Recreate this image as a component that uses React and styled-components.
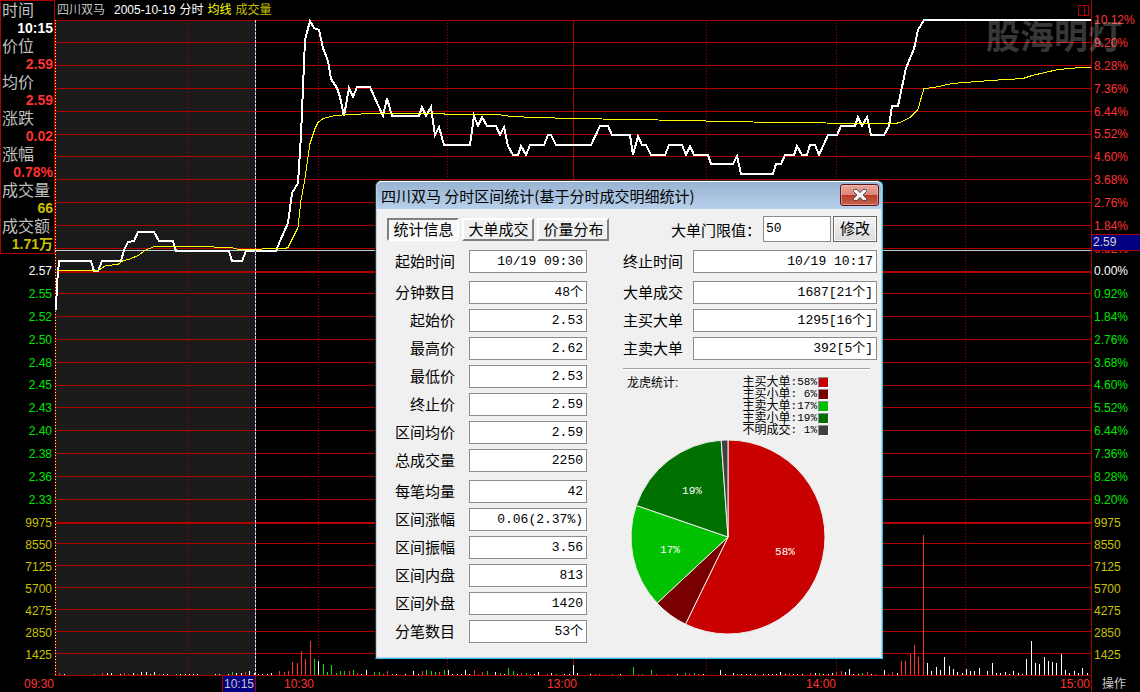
import React, { useState } from "react";
import styled, { createGlobalStyle } from "styled-components";

const RED = "#b00000";
const colors = { r: "#ff3232", g: "#00e600", w: "#ffffff", y: "#c8c000", s: "#c0c0c0" };

const rises = ["10.12%", "9.20%", "8.28%", "7.36%", "6.44%", "5.52%", "4.60%", "3.68%", "2.76%", "1.84%", "0.92%"];
const falls = ["0.92%", "1.84%", "2.76%", "3.68%", "4.60%", "5.52%", "6.44%", "7.36%", "8.28%", "9.20%"];
const prices = ["2.55", "2.52", "2.50", "2.48", "2.45", "2.43", "2.40", "2.38", "2.36", "2.33"];
const volumes = ["9975", "8550", "7125", "5700", "4275", "2850", "1425"];

const summary = [
  ["时间", "10:15", "w"],
  ["价位", "2.59", "r"],
  ["均价", "2.59", "r"],
  ["涨跌", "0.02", "r"],
  ["涨幅", "0.78%", "r"],
  ["成交量", "66", "y"],
  ["成交额", "1.71万", "y"],
];

const gridRows = [
  20, 42, 65, 88, 111, 134, 156, 179, 202, 225, 248, 293, 316, 339, 362, 385,
  407, 430, 453, 476, 499, 543, 565, 587, 609, 631, 653,
];
const dottedColumns = [188, 318, 447, 706, 836, 965];

const pricePoints =
  "55,309 56,309 57,284 59,261 91,261 94,271 98,271 102,261 121,261 124,250 128,242 134,241 138,232 154,232 159,241 173,241 176,251 229,251 232,261 242,261 246,251 276,251 280,241 288,223 292,193 298,183 301,135 305,40 310,21 314,28 319,30 323,48 328,61 331,79 337,88 340,97 344,116 349,88 353,97 357,87 370,87 383,116 387,98 392,116 419,116 422,107 426,116 431,107 435,135 439,127 444,145 470,145 474,116 478,126 482,117 487,126 496,126 500,135 504,127 508,146 513,155 518,155 521,146 526,155 530,145 544,145 548,135 551,135 556,145 591,145 600,126 608,126 612,135 630,135 633,155 638,136 642,145 646,145 651,155 665,155 669,145 682,145 686,155 690,146 694,155 708,155 711,164 733,164 737,156 741,174 773,174 776,164 781,164 785,155 794,155 797,146 802,155 807,155 810,145 815,145 819,155 828,135 837,135 841,126 855,126 858,117 862,126 867,117 871,135 884,135 889,126 892,106 898,106 906,68 914,49 918,30 924,20 1091,20";

const averagePoints =
  "57,270 98,270 106,265 118,264 123,260 129,259 138,255 145,250 154,246 196,246 231,247 239,249 285,248 288,247 298,227 301,200 305,178 310,143 315,128 318,122 323,118 335,115 350,114 372,113 442,113 447,114 498,114 511,116 537,117 572,118 632,119 684,120 727,121 779,122 873,123 895,123 900,122 910,117 918,109 921,98 924,88 934,87 952,83 990,80 1023,78 1032,75 1058,69 1081,67 1091,67";

// x, height, colour
const bars =
  "59,2,r 64,1,w 94,1,g 102,2,r 107,2,w 111,2,w 120,1,w 124,2,r 128,1,r 133,2,w 137,1,r 141,3,w 146,3,w 150,1,w 154,3,w 159,1,g 163,1,w 167,1,w 176,1,g 180,1,w 185,1,w 189,1,w 193,1,w 197,1,w 215,1,w 219,1,w 228,1,w 232,3,g 236,2,w 241,2,w 245,3,r 249,4,w 254,2,w 258,1,w 262,1,w 267,1,w 271,2,w 279,4,r 284,3,r 288,4,r 292,13,r 297,12,r 301,24,r 305,16,r 310,34,r 314,16,g 318,14,w 323,11,g 327,3,g 331,10,g 336,2,g 340,4,g 344,4,g 349,4,r 353,5,g 357,2,r 361,1,w 366,5,w 374,3,g 379,3,g 383,1,g 387,4,r 392,1,g 396,1,w 405,1,w 413,4,w 418,1,w 422,4,r 426,5,g 431,4,g 435,3,g 439,3,r 444,5,g 448,5,w 452,1,w 457,1,w 461,1,w 465,5,w 469,1,w 474,5,r 478,1,r 482,3,r 487,4,g 495,3,w 500,2,g 504,1,w 508,7,g 513,4,g 517,1,w 521,2,r 526,2,g 530,1,r 534,1,w 538,3,w 547,1,r 551,2,w 556,1,g 564,1,w 569,1,w 573,10,w 577,2,w 590,1,w 595,1,r 599,1,r 612,1,g 620,1,w 633,8,g 638,1,r 642,1,g 651,5,g 656,1,r 668,1,r 677,1,w 685,2,g 689,1,r 694,2,g 698,1,r 703,1,w 720,5,w 725,1,w 733,2,w 737,1,g 741,1,w 746,1,w 750,1,w 755,1,w 763,1,w 768,1,w 772,1,w 776,1,w 780,3,w 785,1,w 789,2,r 793,1,w 797,1,w 802,1,w 810,2,r 815,2,w 819,2,g 823,1,w 828,1,w 832,2,w 836,3,r 841,4,r 845,3,w 849,6,w 853,1,w 858,1,w 862,2,g 867,3,r 871,1,w 875,1,r 884,5,w 888,1,r 892,3,r 897,2,w 901,14,r 905,14,r 910,21,r 914,30,r 918,18,r 923,140,r 927,12,w 931,4,w 936,8,w 940,5,w 944,18,w 949,9,w 953,6,w 957,3,w 962,2,w 966,6,w 970,4,w 974,4,w 979,7,w 987,4,w 992,12,w 996,2,w 1000,2,w 1005,3,w 1009,1,w 1013,4,w 1018,2,w 1022,1,w 1026,16,w 1031,34,w 1035,12,w 1039,11,w 1044,18,w 1048,14,w 1052,13,w 1056,12,w 1061,21,w 1065,5,w 1069,2,w 1074,4,w 1078,2,w 1082,7,w 1087,2,w"
    .split(" ")
    .map(bar => bar.split(","));

const leftFields = [
  [["起始时间", "10/19 09:30"]],
  [
    ["分钟数目", "48个"],
    ["起始价", "2.53"],
    ["最高价", "2.62"],
    ["最低价", "2.53"],
    ["终止价", "2.59"],
    ["区间均价", "2.59"],
    ["总成交量", "2250"],
  ],
  [
    ["每笔均量", "42"],
    ["区间涨幅", "0.06(2.37%)"],
    ["区间振幅", "3.56"],
    ["区间内盘", "813"],
    ["区间外盘", "1420"],
    ["分笔数目", "53个"],
  ],
];

const rightFields = [
  [["终止时间", "10/19 10:17"]],
  [
    ["大单成交", "1687[21个]"],
    ["主买大单", "1295[16个]"],
    ["主卖大单", "392[5个]"],
  ],
];

const slices = [
  { name: "主买大单", percent: "58%", color: "#c80000", from: 0, to: 206, label: [155, 116] },
  { name: "主买小单", percent: " 6%", color: "#780000", from: 206, to: 227 },
  { name: "主卖大单", percent: "17%", color: "#00c000", from: 227, to: 289, label: [40, 114] },
  { name: "主卖小单", percent: "19%", color: "#007000", from: 289, to: 356, label: [62, 55] },
  { name: "不明成交", percent: " 1%", color: "#404040", from: 356, to: 360 },
];

const slicePath = ({ from, to }) => {
  const at = deg => {
    const a = (deg * Math.PI) / 180;
    return `${98 + 97 * Math.sin(a)} ${98 - 97 * Math.cos(a)}`;
  };
  return `M98 98L${at(from)}A97 97 0 ${to - from > 180 ? 1 : 0} 1 ${at(to)}Z`;
};

const Chart = () => (
  <Plot viewBox="55 20 1036 656" preserveAspectRatio="none">
    <rect x="56" y="20" width="199" height="655" fill="#1a1a1a" />
    <g stroke={RED} shapeRendering="crispEdges">
      {gridRows.map(y => (
        <line key={y} x1="55" x2="1091" y1={y + 0.5} y2={y + 0.5} />
      ))}
      <line x1="55" x2="1091" y1="272" y2="272" strokeWidth="2" />
      <line x1="55" x2="1091" y1="523" y2="523" strokeWidth="2" />
      <line x1="573.5" x2="573.5" y1="20" y2="675" />
      <line x1="55" x2="1091" y1="675.5" y2="675.5" />
      {dottedColumns.map(x => (
        <line key={x} x1={x + 0.5} x2={x + 0.5} y1="23" y2="675" strokeDasharray="1 2" />
      ))}
      <line x1="55.5" x2="55.5" y1="20" y2="675" />
    </g>
    <g shapeRendering="crispEdges">
      <line x1="55.5" x2="55.5" y1="20" y2="675" stroke="#ffff40" strokeDasharray="1 2" />
      {bars.map(([x, height, color]) => (
        <rect key={x} x={x} y={675 - height} width="1" height={height} fill={colors[color]} />
      ))}
      <line x1="55" x2="1091" y1="250.5" y2="250.5" stroke="#c8c8c8" />
    </g>
    <g fill="none" shapeRendering="crispEdges">
      <polyline points={pricePoints} stroke="#fff" strokeWidth="2" />
      <polyline points={averagePoints} stroke="#ffff00" transform="translate(0 0.5)" />
      <line x1="255.5" x2="255.5" y1="20" y2="675" stroke="#3030a0" />
      <line x1="255.5" x2="255.5" y1="20" y2="675" stroke="#d8d8d8" strokeDasharray="3 1" />
    </g>
  </Plot>
);

const Pie = () => (
  <PieChart viewBox="0 0 196 196" role="img">
    <g stroke="#f0f0f0">
      {slices.map(slice => (
        <path key={slice.name} d={slicePath(slice)} fill={slice.color} />
      ))}
    </g>
    {slices
      .filter(slice => slice.label)
      .map(({ name, percent, label }) => (
        <text key={name} x={label[0]} y={label[1]}>
          {percent}
        </text>
      ))}
  </PieChart>
);

const Fields = ({ groups, $wide }) => (
  <FieldGroups>
    {groups.map(rows => (
      <FieldGroup key={rows[0][0]}>
        {rows.map(([label, value]) => (
          <Field key={label} $wide={$wide}>
            <span>{label}</span>
            <ValueInput readOnly value={value} />
          </Field>
        ))}
      </FieldGroup>
    ))}
  </FieldGroups>
);

const StatsDialog = () => {
  const [tab, setTab] = useState("统计信息");
  const [limit, setLimit] = useState("50");

  return (
    <Dialog role="dialog" aria-labelledby="stats-title">
      <TitleBar>
        <Title id="stats-title">四川双马 分时区间统计(基于分时成交明细统计)</Title>
        <CloseButton type="button" aria-label="关闭">
          <svg width="14" height="12" viewBox="0 0 14 12">
            <path
              d="M.5 1.500Q.5.5 1.500.5H4L7 3.600 10 .5h2.500q1 0 1 1v1L10 6l3.500 3.500v1q0 1-1 1H10L7 8.400 4 11.500H1.500q-1 0-1-1v-1L4 6 .5 2.500z"
              fill="#f4f4f4"
              stroke="#4c4a55"
            />
          </svg>
        </CloseButton>
      </TitleBar>
      <DialogBody>
        <TopRow>
          <Tabs>
            {["统计信息", "大单成交", "价量分布"].map(name => (
              <Tab key={name} type="button" $active={tab === name} onClick={() => setTab(name)}>
                {name}
              </Tab>
            ))}
          </Tabs>
          <LimitForm onSubmit={e => e.preventDefault()}>
            <label htmlFor="limit">大单门限值：</label>
            <LimitInput id="limit" value={limit} onChange={e => setLimit(e.target.value)} />
            <ModifyButton>修改</ModifyButton>
          </LimitForm>
        </TopRow>
        <Columns>
          <Fields groups={leftFields} />
          <div>
            <Fields groups={rightFields} $wide />
            <Separator />
            <LegendRow>
              <span>龙虎统计:</span>
              <Legend>
                {slices.map(({ name, percent, color }) => (
                  <LegendItem key={name}>
                    {name}
                    <Percent>:{percent}</Percent>
                    <Swatch $color={color} />
                  </LegendItem>
                ))}
              </Legend>
            </LegendRow>
            <Pie />
          </div>
        </Columns>
      </DialogBody>
    </Dialog>
  );
};

const App = () => (
  <>
    <GlobalStyle />
    <Screen>
      <Main>
        <LeftColumn>
          <Summary>
            {summary.map(([label, value, color]) => (
              <React.Fragment key={label}>
                <dt>{label}</dt>
                <SummaryValue $color={color}>{value}</SummaryValue>
              </React.Fragment>
            ))}
          </Summary>
          <PriceScale>
            <ScaleLabel $color="w">2.57</ScaleLabel>
            {prices.map(p => (
              <ScaleLabel key={p} $color="g">{p}</ScaleLabel>
            ))}
          </PriceScale>
          <VolumeScale>
            {volumes.map(v => (
              <ScaleLabel key={v} $color="y">{v}</ScaleLabel>
            ))}
          </VolumeScale>
        </LeftColumn>
        <ChartColumn>
          <Header>
            <Stock>四川双马</Stock>
            <span>2005-10-19</span>
            <span>分时</span>
            <Tint $color="#ffff00">均线</Tint>
            <Tint $color="#c8c000">成交量</Tint>
            <PanelButton type="button" aria-label="面板">
              <svg width="11" height="11" viewBox="0 0 11 11" fill="none" stroke={RED}>
                <path d="M.5.5h10v10H.5zM6.500.5v10" />
              </svg>
            </PanelButton>
          </Header>
          <Chart />
        </ChartColumn>
        <RightColumn>
          <PercentScale>
            {rises.map(p => (
              <ScaleLabel key={p} $color="r">{p}</ScaleLabel>
            ))}
            <ScaleLabel $color="w">0.00%</ScaleLabel>
            {falls.map(p => (
              <ScaleLabel key={p} $color="g">{p}</ScaleLabel>
            ))}
          </PercentScale>
          <VolumeScale>
            {volumes.map(v => (
              <ScaleLabel key={v} $color="y">{v}</ScaleLabel>
            ))}
          </VolumeScale>
          <PriceTag>2.59</PriceTag>
        </RightColumn>
      </Main>
      <TimeBar>
        <Time>09:30</Time>
        <TimeTag>10:15</TimeTag>
        <Time>10:30</Time>
        <Time>13:00</Time>
        <Time>14:00</Time>
        <Time>15:00</Time>
        <ActionButton type="button">操作</ActionButton>
      </TimeBar>
      <Watermark>股海明灯</Watermark>
      <StatsDialog />
    </Screen>
  </>
);

const GlobalStyle = createGlobalStyle`
  * {
    box-sizing: border-box;
  }

  body {
    margin: 0;
    background: #000;
    font-family: "Liberation Sans", "Noto Sans CJK SC", sans-serif;
    font-size: 12px;
  }

  button, input {
    font: inherit;
    color: inherit;
    margin: 0;
    padding: 0;
  }
`;

const Screen = styled.div`
  position: relative;
  min-width: 900px;
  overflow: hidden;
  background: #000;
`;

const Main = styled.main`
  display: grid;
  grid-template-columns: 55px 1fr 49px;
`;

const LeftColumn = styled.div`
  display: flex;
  flex-direction: column;
  text-align: right;
`;

const Summary = styled.dl`
  margin: 0 0 6px;
  padding: 0 1px;
  border: 1px solid ${RED};
  font-size: 16px;
  line-height: 19px;
  color: #c0c0c0;
  text-align: left;
`;

const SummaryValue = styled.dd`
  margin: 0;
  font-size: 14px;
  font-weight: bold;
  line-height: 17px;
  text-align: right;
  color: ${p => colors[p.$color]};
`;

const PriceScale = styled.div`
  display: grid;
  grid-auto-rows: 1fr;
  height: 251px;
  margin-bottom: 1px;
  padding-right: 3px;
`;

const PercentScale = styled(PriceScale)`
  height: 502px;
  margin-top: 9px;
  padding: 0 0 0 2px;
`;

const VolumeScale = styled.div`
  display: grid;
  grid-auto-rows: 22px;
  padding: 0 3px 0 2px;
`;

const ScaleLabel = styled.span`
  align-self: center;
  line-height: 14px;
  color: ${p => colors[p.$color]};
`;

const ChartColumn = styled.div`
  min-width: 0;
`;

const Header = styled.header`
  display: flex;
  align-items: center;
  gap: 4px;
  height: 20px;
  padding-left: 2px;
  color: #fff;
  line-height: 18px;
`;

const Stock = styled.span`
  margin-right: 5px;
  color: #c0c0c0;
`;

const Tint = styled.span`
  color: ${p => p.$color};
`;

const PanelButton = styled.button`
  display: flex;
  margin: 0 2px 0 auto;
  border: 0;
  background: none;
`;

const Plot = styled.svg`
  display: block;
  width: 100%;
  height: 656px;
  overflow: visible;
`;

const RightColumn = styled.div`
  position: relative;
  border-left: 1px solid ${RED};
`;

const PriceTag = styled.div`
  position: absolute;
  top: 234px;
  left: 0;
  right: 0;
  height: 17px;
  padding-left: 1px;
  border: solid ${RED};
  border-width: 1px 0;
  background: #000080;
  color: #d8d8d8;
  line-height: 14px;
`;

const TimeBar = styled.footer`
  display: grid;
  grid-template-columns: 55px 201fr 59fr 263fr 259fr 254fr 49px;
  height: 16px;
  line-height: 16px;
  text-align: right;
  color: ${colors.r};
`;

const Time = styled.span`
  padding-right: 1px;
`;

const TimeTag = styled.span`
  justify-self: end;
  padding: 0 1px;
  border: solid ${RED};
  border-width: 0 1px;
  background: #000080;
  color: #c8c8c8;
`;

const ActionButton = styled.button`
  padding-right: 4px;
  border: 0;
  border-left: 1px solid ${RED};
  background: none;
  color: #c8c8c8;
  line-height: 16px;
`;

const Watermark = styled.div`
  position: absolute;
  top: 15px;
  right: 18px;
  font-family: "Noto Sans CJK SC", sans-serif;
  font-size: 34px;
  font-weight: bold;
  line-height: 40px;
  color: rgba(255, 255, 255, 0.22);
`;

const Dialog = styled.section`
  position: absolute;
  top: 180px;
  left: 375px;
  width: 508px;
  padding: 0 1px 1px;
  border: 1px solid;
  border-color: #303030 #30c8f0 #30c8f0 #303030;
  border-radius: 6px 6px 0 0;
  background: #b8d0ea;
  color: #000;
`;

const TitleBar = styled.div`
  display: flex;
  justify-content: space-between;
  height: 28px;
  padding: 2px 2px 0 4px;
  border-top: 1px solid #fff;
  border-radius: 5px 5px 0 0;
  background: linear-gradient(#98b4d2, #b8d0ea);
`;

const Title = styled.h1`
  margin: 0;
  font-family: "Noto Sans CJK SC", sans-serif;
  font-size: 15px;
  font-weight: normal;
  line-height: 23px;
`;

const CloseButton = styled.button`
  display: flex;
  align-items: center;
  justify-content: center;
  width: 39px;
  height: 22px;
  border: 1px solid #5a1420;
  border-radius: 3px;
  background: linear-gradient(#e8a89c, #d88678 48%, #b83c28 50%, #c8604c);
  box-shadow: inset 0 0 0 1px rgba(255, 210, 200, 0.45);
`;

const DialogBody = styled.div`
  padding: 6px 4px 14px 10px;
  background: #f0f0f0;
  font-size: 15px;
`;

const TopRow = styled.div`
  display: flex;
  align-items: center;
  justify-content: space-between;
  height: 28px;
  margin-bottom: 7px;
`;

const Tabs = styled.div`
  display: flex;
  gap: 3px;
`;

const Tab = styled.button`
  width: 72px;
  height: 23px;
  padding: 1px 0 0 1px;
  border: 2px solid;
  border-color: ${p => (p.$active ? "#808080 #fff #fff #808080" : "#fff #808080 #808080 #fff")};
  background: ${p => (p.$active ? "#f8f8f8" : "#f0f0f0")};
  line-height: 18px;
`;

const LimitForm = styled.form`
  display: flex;
  align-items: center;
  gap: 2px;
`;

const LimitInput = styled.input`
  width: 68px;
  height: 26px;
  padding: 0 2px 2px;
  border: 1px solid #8c8c8c;
  background: #fff;
  font-family: "Liberation Mono", monospace;
  font-size: 13px;
`;

const ModifyButton = styled.button`
  width: 44px;
  height: 26px;
  border: 1px solid #686868;
  background: linear-gradient(#f4f4f4, #dcdcdc);
  box-shadow: inset 0 0 0 1px #fafafa;
  line-height: 20px;
`;

const Columns = styled.div`
  display: grid;
  grid-template-columns: 200px 1fr;
  gap: 36px;
`;

const FieldGroups = styled.div`
  display: flex;
  flex-direction: column;
  gap: 8px;
`;

const FieldGroup = styled.div`
  display: grid;
  gap: 5px;
`;

const Field = styled.label`
  display: grid;
  grid-template-columns: ${p => (p.$wide ? "60px 1fr" : "68px 1fr")};
  gap: ${p => (p.$wide ? 10 : 14)}px;
  line-height: 23px;
  text-align: right;
`;

const ValueInput = styled.input`
  width: 100%;
  height: 23px;
  padding: 0 3px;
  border: 1px solid #8c8c8c;
  background: #fff;
  font-family: "Liberation Mono", "Noto Sans CJK SC", monospace;
  font-size: 13px;
  text-align: right;
`;

const Separator = styled.hr`
  height: 2px;
  margin: 8px 7px 6px 0;
  border: 0;
  border-top: 1px solid #a0a0a0;
  border-bottom: 1px solid #fff;
`;

const LegendRow = styled.div`
  display: flex;
  justify-content: space-between;
  padding: 0 48px 0 4px;
  font-size: 12px;
  line-height: 14px;
`;

const Legend = styled.ul`
  margin: 0;
  padding: 0;
  list-style: none;
`;

const LegendItem = styled.li`
  display: flex;
  align-items: center;
  height: 12px;
`;

const Percent = styled.span`
  font-family: "Liberation Mono", monospace;
  font-size: 11px;
  white-space: pre;
`;

const Swatch = styled.i`
  width: 11px;
  height: 11px;
  margin-left: 1px;
  border: 1px solid;
  border-color: #909090 #fff #fff #909090;
  background: ${p => p.$color};
`;

const PieChart = styled.svg`
  display: block;
  width: 196px;
  height: 196px;
  margin: 3px 0 0 7px;

  text {
    fill: #fff;
    font-family: "Liberation Mono", monospace;
    font-size: 11px;
    text-anchor: middle;
  }
`;

export default App;
